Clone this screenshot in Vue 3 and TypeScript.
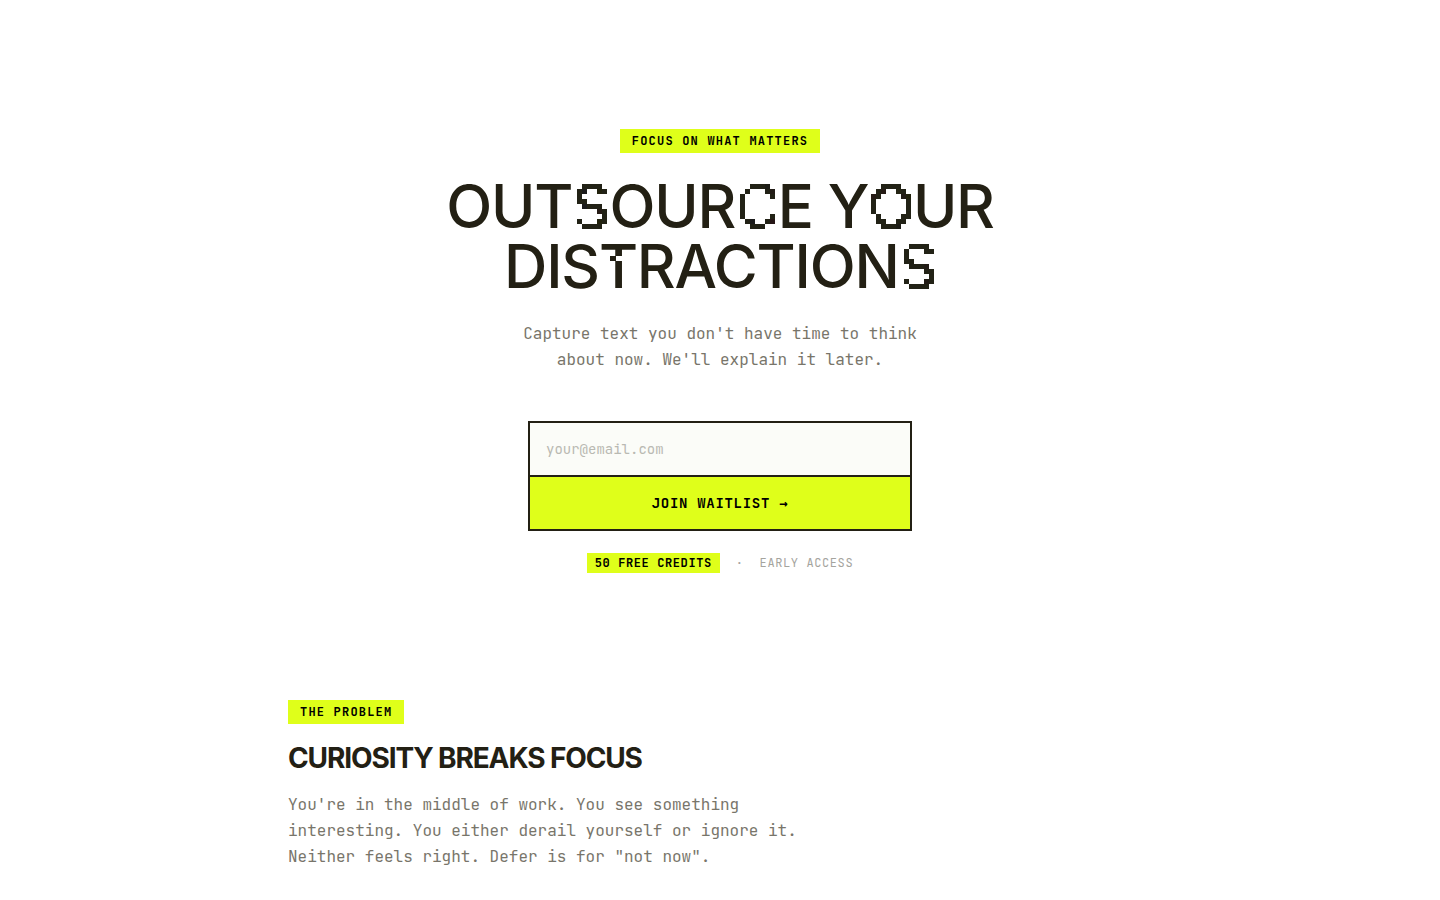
<script setup lang="ts">
import { ref } from 'vue'

type GlyphStyle = 'plain' | 'pixel' | 'pixel shifted' | 'notch'

interface Glyph {
  char: string
  style: GlyphStyle
}

const email = ref('')

const toGlyphs = (text: string, styles: Record<number, GlyphStyle>): Glyph[] =>
  [...text].map((char, i) => ({ char, style: styles[i] ?? 'plain' }))

const headline: Glyph[][] = [
  toGlyphs('OUTSOURCE YOUR', { 3: 'pixel shifted', 7: 'pixel shifted', 11: 'pixel' }),
  toGlyphs('DISTRACTIONS', { 3: 'notch', 11: 'pixel shifted' }),
]

const filters = [
  { id: 'pixelate', phase: 0 },
  { id: 'pixelate-shifted', phase: 2 },
]
</script>

<template>
  <main class="page">
    <svg class="defs" width="0" height="0" aria-hidden="true">
      <filter
        v-for="f in filters"
        :id="f.id"
        :key="f.id"
        x="0"
        y="0"
        width="60"
        height="60"
        filterUnits="userSpaceOnUse"
        primitiveUnits="userSpaceOnUse"
      >
        <feFlood :x="f.phase" y="0" width="1" height="1" flood-color="#000" />
        <feComposite x="0" y="0" width="5" height="5" />
        <feTile result="grid" x="0" y="0" width="60" height="60" />
        <feComposite in="SourceGraphic" in2="grid" operator="in" x="0" y="0" width="60" height="60" />
        <feComponentTransfer>
          <feFuncA type="discrete" tableValues="0 1 1" />
        </feComponentTransfer>
        <feMorphology operator="dilate" radius="2" x="0" y="0" width="60" height="60" />
      </filter>
    </svg>

    <section class="hero">
      <span class="badge">FOCUS ON WHAT MATTERS</span>
      <h1 class="headline">
        <span v-for="(line, l) in headline" :key="l" class="line"
          ><span v-for="(g, i) in line" :key="i" :class="g.style">{{ g.char }}</span></span
        >
      </h1>
      <p class="copy lead">Capture text you don't have time to think about now. We'll explain it later.</p>
      <form class="signup" @submit.prevent>
        <input v-model="email" class="email" type="email" placeholder="your@email.com" aria-label="Email address" />
        <button class="join" type="submit">JOIN WAITLIST <span class="arrow">→</span></button>
      </form>
      <div class="perks">
        <span class="credits">50 FREE CREDITS</span>
        <span>·</span>
        <span>EARLY ACCESS</span>
      </div>
    </section>

    <section class="problem">
      <span class="badge">THE PROBLEM</span>
      <h2 class="title">CURIOSITY BREAKS FOCUS</h2>
      <p class="copy">
        You're in the middle of work. You see something interesting. You either derail yourself or ignore it. Neither
        feels right. Defer is for "not now".
      </p>
    </section>
  </main>
</template>

<style>
body {
  background: #fff;
}
</style>

<style scoped>
.page {
  --ink: #232014;
  --lime: #dfff1a;
  box-sizing: border-box;
  max-width: 912px;
  margin: 0 auto;
  padding: 129px 24px 30px;
  color: var(--ink);
  font-family: 'JetBrains Mono', 'DejaVu Sans Mono', 'Liberation Mono', monospace;
}
.defs {
  position: absolute;
}
.hero {
  display: flex;
  flex-direction: column;
  align-items: center;
}
.badge {
  display: inline-block;
  padding: 4px 12px;
  background: var(--lime);
  color: #000;
  font-size: 12px;
  font-weight: 700;
  line-height: 16px;
  letter-spacing: 0.1em;
}
.headline {
  margin: 23px 0 0;
  font-family: Inter, 'Liberation Sans', sans-serif;
  font-size: 60px;
  font-weight: 500;
  line-height: 60px;
  letter-spacing: -0.02em;
  text-align: center;
}
.line {
  display: block;
  height: 60px;
  white-space: pre-wrap;
}
.pixel {
  display: inline-block;
  font-weight: 400;
  filter: url(#pixelate);
}
.shifted {
  filter: url(#pixelate-shifted);
}
.notch {
  display: inline-block;
  position: relative;
}
.notch::after {
  content: '';
  position: absolute;
  top: 20px;
  left: calc(50% - 8px);
  width: 12px;
  height: 5px;
  background: linear-gradient(to right, var(--ink) 50%, #fff 50%);
}
.copy {
  max-width: 528px;
  margin: 0;
  color: #78756a;
  font-size: 16px;
  line-height: 26px;
}
.lead {
  max-width: 448px;
  margin-top: 25px;
  text-align: center;
}
.signup {
  display: flex;
  flex-direction: column;
  box-sizing: border-box;
  width: 100%;
  max-width: 384px;
  margin-top: 48px;
  border: 2px solid var(--ink);
}
.email,
.join {
  box-sizing: border-box;
  height: 52px;
  margin: 0;
  padding: 0 16px;
  border: 0;
  border-radius: 0;
  font-family: inherit;
  font-size: 14px;
}
.email {
  background: #fbfcf8;
  color: var(--ink);
}
.email::placeholder {
  color: #b9b9b2;
  opacity: 1;
}
.join {
  height: 54px;
  border-top: 2px solid var(--ink);
  background: var(--lime);
  color: #000;
  font-weight: 700;
  letter-spacing: 0.05em;
  cursor: pointer;
}
.arrow {
  font-family: 'DejaVu Sans Mono', monospace;
}
.perks {
  display: flex;
  flex-wrap: wrap;
  align-items: center;
  justify-content: center;
  gap: 16px;
  margin-top: 22px;
  color: #a5a49e;
  font-size: 12px;
  line-height: 16px;
  letter-spacing: 0.05em;
}
.credits {
  padding: 2px 8px;
  background: var(--lime);
  color: #000;
  font-weight: 700;
}
.problem {
  margin-top: 127px;
}
.title {
  margin: 16px 0;
  font-family: Inter, 'Liberation Sans', sans-serif;
  font-size: 28px;
  font-weight: 700;
  line-height: 36px;
  letter-spacing: -0.04em;
}
</style>
